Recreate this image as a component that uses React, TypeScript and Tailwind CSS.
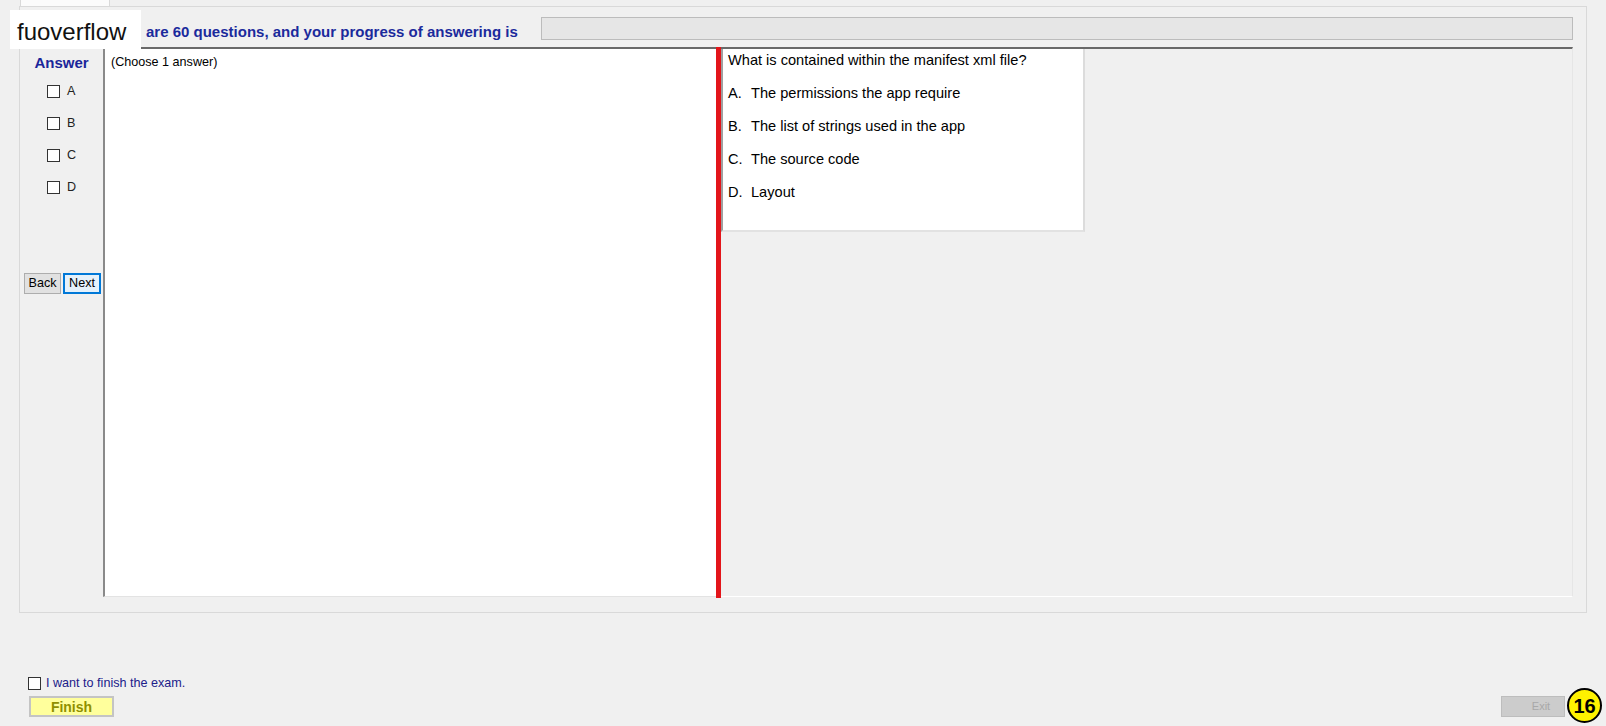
import React from "react";

type Option = { key: string; text: string };

const options: Option[] = [
    { key: "A.", text: "The permissions the app require" },
    { key: "B.", text: "The list of strings used in the app" },
    { key: "C.", text: "The source code" },
    { key: "D.", text: "Layout" },
];

const Box: React.FC = () => (
    <span className="inline-block w-[13px] h-[13px] bg-white border border-[#333333] shrink-0" />
);

const AnswerColumn: React.FC = () => (
    <div className="w-[83px] shrink-0 flex flex-col">
        <div className="pt-[7px] text-center text-[15px] leading-[18px] font-bold text-[#1a269a]">Answer</div>
        <div className="mt-[3px] flex flex-col">
            {["A", "B", "C", "D"].map((k) => (
                <div key={k} className="h-[32px] flex items-center pl-[27px] gap-[7px]">
                    <Box />
                    <span className="text-[12.6px] leading-[15px] text-[#222]">{k}</span>
                </div>
            ))}
        </div>
        <div className="mt-[70px] ml-[4px] flex gap-[2px]">
            <button className="w-[37px] h-[21px] bg-[#e1e1e1] border border-[#adadad] text-[12.6px] leading-[15px] text-black">
                Back
            </button>
            <button className="w-[38px] h-[21px] bg-[#e5f1fb] border-2 border-[#0078d7] text-[12.6px] leading-[15px] text-black">
                Next
            </button>
        </div>
    </div>
);

export default function App() {
    return (
        <div className="relative w-[1606px] h-[726px] overflow-hidden bg-[#f0f0f0] font-['Liberation_Sans',Arial,sans-serif] text-black">
            {/* tab strip */}
            <div className="h-[6px] flex">
                <div className="ml-[20px] w-[90px] h-[6px] bg-[#fbfbfb] border-x border-[#d9d9d9]" />
            </div>

            {/* tab page */}
            <div className="ml-[19px] w-[1568px] h-[607px] border border-[#d9d9d9] bg-[#f0f0f0] flex flex-col">
                <div className="h-[40px] flex items-start shrink-0">
                    <span className="ml-[126px] mt-[16px] text-[15px] leading-[18px] font-bold text-[#1b2a9c] whitespace-nowrap">
                        are 60 questions, and your progress of answering is
                    </span>
                    <div className="ml-auto mr-[13px] mt-[10px] w-[1032px] h-[23px] bg-[#e6e6e6] border border-[#bcbcbc]" />
                </div>

                <div className="flex h-[550px] shrink-0">
                    <AnswerColumn />

                    <div className="w-[613px] shrink-0 bg-white border-t-2 border-l-2 border-b border-t-[#696969] border-l-[#8a8a8a] border-b-[#e3e3e3] pl-[6px] pt-[6px]">
                        <div className="text-[12.6px] leading-[15px]">(Choose 1 answer)</div>
                    </div>

                    <div className="w-[5px] shrink-0 h-[551px] bg-[#e3151a]" />

                    <div className="w-[852px] shrink-0 border-t-2 border-t-[#696969] border-r border-r-[#e6e6e6] border-b border-b-white">
                        <div className="w-[364px] h-[183px] bg-white border-l-2 border-l-[#a0a0a0] border-r-2 border-r-[#dcdcdc] border-b-2 border-b-[#e2e2e2] pl-[5px] pt-[3px] flex flex-col gap-[16px]">
                            <div className="text-[14.6px] leading-[17px] whitespace-nowrap">
                                What is contained within the manifest xml file?
                            </div>
                            {options.map((o) => (
                                <div key={o.key} className="flex text-[14.6px] leading-[17px] whitespace-nowrap">
                                    <span className="w-[23px] shrink-0">{o.key}</span>
                                    <span>{o.text}</span>
                                </div>
                            ))}
                        </div>
                    </div>
                </div>
            </div>

            {/* footer */}
            <div className="mt-[63px] ml-[28px] h-[15px] flex items-center gap-[5px]">
                <Box />
                <span className="text-[12.6px] leading-[15px] text-[#20208a]">I want to finish the exam.</span>
            </div>
            <div className="mt-[5px] flex items-start">
                <button className="ml-[29px] w-[85px] h-[21px] bg-[#ffff9c] border-2 border-[#c4c4c4] text-[14px] leading-[16px] font-bold text-[#8f8f00]">
                    Finish
                </button>
                <button className="ml-auto mr-[41px] w-[64px] h-[21px] bg-[#cccccc] border border-[#bdbdbd] pl-[16px] flex items-center justify-center text-[11px] text-[#a8a8a8]">
                    Exit
                </button>
            </div>

            {/* overlays */}
            <div className="absolute left-[10px] top-[10px] w-[131px] h-[39px] bg-white pl-[7px] pt-[8px] text-[24px] leading-[28px] text-[#111]">
                fuoverflow
            </div>
            <div className="absolute left-[1567px] top-[688px] w-[35px] h-[35px] rounded-full bg-[#fff200] border-2 border-black flex items-center justify-center text-[20px] font-bold leading-none">
                16
            </div>
        </div>
    );
}
